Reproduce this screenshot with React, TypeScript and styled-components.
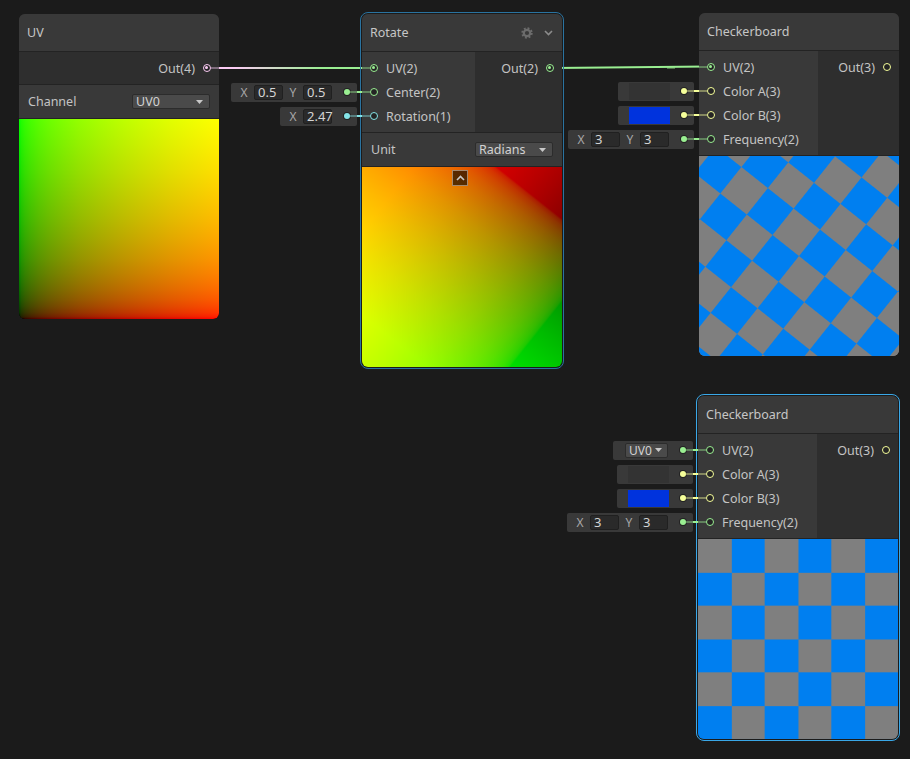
import React from 'react';
import styled, { createGlobalStyle, css } from 'styled-components';

const PORT = { v1: '#84e4e7', v2: '#9aef92', v3: '#f6ff9a', v4: '#fbcbf4' } as const;
type Kind = keyof typeof PORT;

const alpha = (hex: string, a: number) => {
  const n = parseInt(hex.slice(1), 16);
  return `rgba(${(n >> 16) & 255}, ${(n >> 8) & 255}, ${n & 255}, ${a})`;
};

// linear value ramp displayed in sRGB (gamma corrected stops)
const ramp = (ch: 'r' | 'g', from: number, to: number) => {
  const ts = [0, 0.01, 0.03, 0.06, 0.1, 0.15, 0.22, 0.3, 0.4, 0.5, 0.62, 0.75, 0.87, 1];
  return ts
    .map((t) => {
      const v = Math.round(255 * Math.pow(t, 1 / 2.2));
      const col = ch === 'r' ? `rgb(${v},0,0)` : `rgb(0,${v},0)`;
      return `${col} ${(from + (to - from) * t).toFixed(2)}%`;
    })
    .join(', ');
};

const ROT = 2.47;
const COS = Math.cos(ROT);
const SIN = Math.sin(ROT);
const DEG = 180 / Math.PI;
const R_ANGLE = Math.atan2(COS, SIN) * DEG;
const G_ANGLE = Math.atan2(-SIN, COS) * DEG;
const HALF = 50 / (Math.abs(COS) + Math.abs(SIN));
const CHECK_ANGLE = Math.atan2(-SIN, COS) * DEG;

const GRAY = '#7f7f7f';
const BLUE = '#007ff0';

const GlobalStyle = createGlobalStyle`
  html, body { margin: 0; padding: 0; background: #1b1b1b; }
  body { font-family: "Noto Sans", "DejaVu Sans", sans-serif; }
`;

const Canvas = styled.div`
  position: relative;
  width: 910px;
  height: 759px;
  overflow: hidden;
  background: #1b1b1b;
  font-family: "Noto Sans", "DejaVu Sans", sans-serif;
  font-size: 12.5px;
  color: #c4c4c4;
`;

const Edges = styled.svg`
  position: absolute;
  left: 0;
  top: 0;
`;

const Node = styled.div<{ $x: number; $y: number; $sel?: 'dim' | 'bright' }>`
  position: absolute;
  left: ${(p) => p.$x}px;
  top: ${(p) => p.$y}px;
  width: 200px;
  border-radius: 6px;
  background: #2e2e2e;
  ${(p) =>
    p.$sel &&
    css`
      outline: 1px solid ${p.$sel === 'bright' ? '#3aa8e8' : '#2a73a0'};
      outline-offset: 1px;
    `}
`;

const Header = styled.div`
  display: flex;
  align-items: center;
  height: 38px;
  box-sizing: border-box;
  padding: 0 9px 0 8px;
  background: #393939;
  border-bottom: 1px solid #232323;
  border-radius: 6px 6px 0 0;
`;

const Title = styled.div`
  flex: 1;
  font-size: 12.5px;
  color: #c6c6c6;
`;

const HeaderIcons = styled.div`
  display: flex;
  align-items: center;
  gap: 11px;
`;

const Ports = styled.div`
  display: flex;
`;

const Inputs = styled.div<{ $w: number }>`
  width: ${(p) => p.$w}px;
  padding: 4px 0;
  background: #393939;
`;

const Outputs = styled.div`
  flex: 1;
  padding: 4px 0;
  background: #2e2e2e;
`;

const InRow = styled.div`
  position: relative;
  display: flex;
  align-items: center;
  height: 24px;
  padding-left: 8px;
`;

const OutRow = styled.div`
  position: relative;
  display: flex;
  align-items: center;
  justify-content: flex-end;
  height: 24px;
  padding-right: 8px;
`;

const PortLabel = styled.span<{ $side: 'in' | 'out' }>`
  white-space: nowrap;
  ${(p) => (p.$side === 'in' ? 'margin-left: 8px;' : 'margin-right: 8px;')}
`;

const PortRing = styled.span<{ $c: string; $on?: boolean }>`
  position: relative;
  z-index: 1;
  flex: none;
  width: 8px;
  height: 8px;
  box-sizing: border-box;
  border: 1.5px solid ${(p) => p.$c};
  border-radius: 50%;
  background: #242424;
  ${(p) =>
    p.$on &&
    css`
      &::after {
        content: '';
        position: absolute;
        left: 1px;
        top: 1px;
        width: 3px;
        height: 3px;
        border-radius: 50%;
        background: ${p.$c};
      }
    `}
`;

const Wire = styled.span<{ $left: number; $width: number; $bg: string }>`
  position: absolute;
  top: 11px;
  left: ${(p) => p.$left}px;
  width: ${(p) => p.$width}px;
  height: 2px;
  background: ${(p) => p.$bg};
`;

const ControlRow = styled.div`
  display: flex;
  align-items: center;
  justify-content: space-between;
  height: 34px;
  box-sizing: border-box;
  padding: 0 9px;
  background: #393939;
  border-top: 1px solid #232323;
`;

const ControlLabel = styled.span`
  color: #c4c4c4;
`;

const Dropdown = styled.div<{ $w: number }>`
  display: flex;
  align-items: center;
  justify-content: space-between;
  width: ${(p) => p.$w}px;
  height: 15px;
  box-sizing: border-box;
  padding: 0 6px 0 3px;
  background: #4a4a4a;
  border: 1px solid #2c2c2c;
  border-radius: 2px;
  color: #d2d2d2;
  font-size: 12.5px;
`;

const Preview = styled.div`
  position: relative;
  height: 201px;
  box-sizing: border-box;
  border-top: 1px solid #232323;
  border-radius: 0 0 6px 6px;
  overflow: hidden;
`;

const UvPreview = styled(Preview)`
  background-color: #000;
  background-image: linear-gradient(to right, ${ramp('r', 0, 100)}),
    linear-gradient(to top, ${ramp('g', 0, 100)});
  background-blend-mode: screen;
`;

const RotatePreview = styled(Preview)`
  background-color: #000;
  background-image: linear-gradient(${R_ANGLE}deg, ${ramp('r', 50 - HALF, 50 + HALF)}),
    linear-gradient(${G_ANGLE}deg, ${ramp('g', 50 - HALF, 50 + HALF)});
  background-blend-mode: screen;
`;

const checker = css`
  background-image: conic-gradient(${BLUE} 0 25%, ${GRAY} 0 50%, ${BLUE} 0 75%, ${GRAY} 0);
  background-size: 66.6667px 66.6667px;
`;

const CheckerPreview = styled(Preview)`
  ${checker}
`;

const RotatedCheckerPreview = styled(Preview)`
  background: ${GRAY};
`;

const RotatedPattern = styled.div`
  position: absolute;
  left: 50%;
  top: 50%;
  width: 400px;
  height: 400px;
  margin: -200px 0 0 -200px;
  transform: rotate(${CHECK_ANGLE}deg);
  ${checker}
`;

const CollapseButton = styled.div`
  position: absolute;
  left: 90px;
  top: 3px;
  width: 16px;
  height: 16px;
  box-sizing: border-box;
  display: flex;
  align-items: center;
  justify-content: center;
  background: rgba(0, 0, 0, 0.62);
  border: 1px solid rgba(190, 170, 150, 0.75);
`;

const Widget = styled.div<{ $pad: number }>`
  position: absolute;
  right: calc(100% + 5px);
  top: 2.5px;
  display: flex;
  align-items: center;
  height: 19px;
  box-sizing: border-box;
  padding-left: ${(p) => p.$pad}px;
  background: #393939;
  border-radius: 2px;
`;

const AxisLabel = styled.span`
  width: 12px;
  margin-right: 4px;
  text-align: center;
  font-size: 12px;
  color: #a8a8a8;
`;

const Field = styled.span`
  display: flex;
  align-items: center;
  width: 29px;
  height: 15px;
  box-sizing: border-box;
  margin-right: 4px;
  padding-left: 3px;
  background: #2a2a2a;
  border: 1px solid #202020;
  border-radius: 2px;
  white-space: nowrap;
  font-size: 13px;
  color: #d4d4d4;
`;

const Swatch = styled.span<{ $c: string }>`
  width: 41px;
  height: 17px;
  margin-right: 3px;
  background: ${(p) => p.$c};
`;

const MiniDropdown = styled(Dropdown)`
  margin-right: 4px;
  padding: 0 5px 0 3px;
  font-size: 12px;
`;

const DotSlot = styled.span`
  display: flex;
  justify-content: flex-end;
  width: 21px;
  padding-right: 7px;
  box-sizing: border-box;
`;

const Dot = styled.span<{ $c: string }>`
  width: 6px;
  height: 6px;
  border-radius: 50%;
  background: ${(p) => p.$c};
  box-shadow: 0 0 0 1px #232323;
`;

const Caret = () => (
  <svg width="7" height="4" viewBox="0 0 7 4">
    <polygon points="0,0 7,0 3.5,4" fill="#c8c8c8" />
  </svg>
);

const Gear = () => (
  <svg width="12" height="12" viewBox="0 0 12 12">
    <circle cx="6" cy="6" r="4.7" fill="none" stroke="#6c6c6c" strokeWidth="2" strokeDasharray="1.85 1.84" />
    <circle cx="6" cy="6" r="3.2" fill="none" stroke="#6c6c6c" strokeWidth="2.2" />
  </svg>
);

const Chevron = ({ up, color }: { up?: boolean; color: string }) => (
  <svg width="9" height="6" viewBox="0 0 9 6">
    <polyline
      points={up ? '1,5 4.5,1.5 8,5' : '1,1 4.5,4.5 8,1'}
      fill="none"
      stroke={color}
      strokeWidth="1.6"
    />
  </svg>
);

const widgetWire = (k: Kind) =>
  `linear-gradient(to right, ${alpha(PORT[k], 0.4)} 0 7px, ${PORT[k]} 7px 12px, ${alpha(PORT[k], 0.4)} 12px)`;

type InPortProps = {
  kind: Kind;
  label: string;
  connected?: boolean;
  widget?: React.ReactNode;
  pad?: number;
};

const InPort = ({ kind, label, connected, widget, pad = 7 }: InPortProps) => (
  <InRow>
    {widget && (
      <>
        <Widget $pad={pad}>
          {widget}
          <DotSlot>
            <Dot $c={PORT[kind]} />
          </DotSlot>
        </Widget>
        <Wire $left={-12} $width={20} $bg={widgetWire(kind)} />
      </>
    )}
    {connected && <Wire $left={0} $width={8} $bg={alpha(PORT[kind], 0.4)} />}
    <PortRing $c={PORT[kind]} $on={connected} />
    <PortLabel $side="in">{label}</PortLabel>
  </InRow>
);

const OutPort = ({ kind, label, connected }: { kind: Kind; label: string; connected?: boolean }) => (
  <OutRow>
    <PortLabel $side="out">{label}</PortLabel>
    <PortRing $c={PORT[kind]} $on={connected} />
    {connected && <Wire $left={192} $width={8} $bg={alpha(PORT[kind], 0.4)} />}
  </OutRow>
);

const Vec2 = ({ x, y }: { x: string; y?: string }) => (
  <>
    <AxisLabel>X</AxisLabel>
    <Field>{x}</Field>
    {y !== undefined && (
      <>
        <AxisLabel>Y</AxisLabel>
        <Field>{y}</Field>
      </>
    )}
  </>
);

const CheckerInputs = ({ uvWidget }: { uvWidget: boolean }) => (
  <Inputs $w={119}>
    {uvWidget ? (
      <InPort
        kind="v2"
        label="UV(2)"
        pad={12}
        widget={
          <MiniDropdown $w={43}>
            UV0
            <Caret />
          </MiniDropdown>
        }
      />
    ) : (
      <InPort kind="v2" label="UV(2)" connected />
    )}
    <InPort kind="v3" label="Color A(3)" pad={11} widget={<Swatch $c="#333333" />} />
    <InPort kind="v3" label="Color B(3)" pad={11} widget={<Swatch $c="#0033dd" />} />
    <InPort kind="v2" label="Frequency(2)" widget={<Vec2 x="3" y="3" />} />
  </Inputs>
);

export default function App() {
  return (
    <>
      <GlobalStyle />
      <Canvas>
        <Edges width={910} height={759}>
          <defs>
            <linearGradient id="uvEdge" gradientUnits="userSpaceOnUse" x1="211" y1="68" x2="370" y2="68">
              <stop offset="0.15" stopColor={PORT.v4} />
              <stop offset="0.7" stopColor={PORT.v2} />
            </linearGradient>
          </defs>
          <line x1="211" y1="68" x2="370" y2="68" stroke="url(#uvEdge)" strokeWidth="2" />
          <line x1="554" y1="68" x2="707" y2="66.5" stroke={PORT.v2} strokeWidth="2" />
        </Edges>

        <Node $x={19} $y={14}>
          <Header>
            <Title>UV</Title>
          </Header>
          <Ports>
            <Outputs>
              <OutPort kind="v4" label="Out(4)" connected />
            </Outputs>
          </Ports>
          <ControlRow>
            <ControlLabel>Channel</ControlLabel>
            <Dropdown $w={78}>
              UV0
              <Caret />
            </Dropdown>
          </ControlRow>
          <UvPreview />
        </Node>

        <Node $x={362} $y={14} $sel="dim">
          <Header>
            <Title>Rotate</Title>
            <HeaderIcons>
              <Gear />
              <Chevron color="#8c8c8c" />
            </HeaderIcons>
          </Header>
          <Ports>
            <Inputs $w={113}>
              <InPort kind="v2" label="UV(2)" connected />
              <InPort kind="v2" label="Center(2)" widget={<Vec2 x="0.5" y="0.5" />} />
              <InPort kind="v1" label="Rotation(1)" widget={<Vec2 x="2.47" />} />
            </Inputs>
            <Outputs>
              <OutPort kind="v2" label="Out(2)" connected />
            </Outputs>
          </Ports>
          <ControlRow>
            <ControlLabel>Unit</ControlLabel>
            <Dropdown $w={78}>
              Radians
              <Caret />
            </Dropdown>
          </ControlRow>
          <RotatePreview>
            <CollapseButton>
              <Chevron up color="#c8c8c8" />
            </CollapseButton>
          </RotatePreview>
        </Node>

        <Node $x={699} $y={13}>
          <Header>
            <Title>Checkerboard</Title>
          </Header>
          <Ports>
            <CheckerInputs uvWidget={false} />
            <Outputs>
              <OutPort kind="v3" label="Out(3)" />
            </Outputs>
          </Ports>
          <RotatedCheckerPreview>
            <RotatedPattern />
          </RotatedCheckerPreview>
        </Node>

        <Node $x={698} $y={396} $sel="bright">
          <Header>
            <Title>Checkerboard</Title>
          </Header>
          <Ports>
            <CheckerInputs uvWidget />
            <Outputs>
              <OutPort kind="v3" label="Out(3)" />
            </Outputs>
          </Ports>
          <CheckerPreview />
        </Node>
      </Canvas>
    </>
  );
}
